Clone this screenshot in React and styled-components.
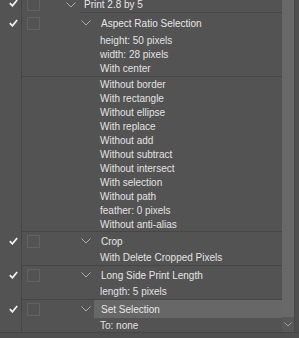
import React from 'react';
import styled, { createGlobalStyle } from 'styled-components';

const Global = createGlobalStyle`
  html, body { margin: 0; padding: 0; background: #535353; }
  body { width: 299px; height: 338px; overflow: hidden; font-family: "Liberation Sans", Arial, sans-serif; }
`;

const Panel = styled.div`
  width: 299px;
  height: 338px;
  display: flex;
  flex-direction: column;
  background: #535353;
  overflow: hidden;
`;

const Main = styled.div`
  height: 332px;
  display: flex;
  overflow: hidden;
`;

const List = styled.div`
  width: 282px;
  display: flex;
  flex-direction: column;
  overflow: hidden;
`;

const Scroller = styled.div`
  margin-top: -4px;
  display: flex;
  flex-direction: column;
`;

const Group = styled.div`
  display: flex;
`;

const CheckCol = styled.div`
  width: 22px;
  flex: 0 0 22px;
  border-right: 1px solid #464646;
  display: flex;
  align-items: flex-start;
  padding-left: 9px;
  padding-top: ${p => p.$top}px;
  box-sizing: border-box;
`;

const Body = styled.div`
  flex: 1;
  display: flex;
  flex-direction: column;
  border-bottom: ${p => (p.$sep ? '1px solid #464646' : 'none')};
`;

const TitleRow = styled.div`
  height: ${p => p.$h}px;
  display: flex;
  align-items: center;
`;

const DialogBox = styled.div`
  width: 13px;
  height: 13px;
  box-sizing: border-box;
  border: 1px solid #626262;
  margin-left: 5px;
  flex: 0 0 auto;
`;

const Chevron = styled.svg`
  margin-left: ${p => p.$ml}px;
  flex: 0 0 auto;
`;

const Title = styled.div`
  flex: 1;
  align-self: stretch;
  display: flex;
  align-items: center;
  margin-left: ${p => p.$ml}px;
  padding-left: ${p => p.$pl}px;
  background: ${p => (p.$active ? '#676767' : 'transparent')};
  border-bottom: ${p => (p.$line ? '1px solid #464646' : 'none')};
  color: #e6e6e6;
  font-size: 10px;
  white-space: nowrap;
`;

const Params = styled.div`
  padding-left: 78px;
  padding-bottom: ${p => p.$pb || 0}px;
  border-bottom: ${p => (p.$line ? '1px solid #464646' : 'none')};
  display: flex;
  flex-direction: column;
`;

const Param = styled.div`
  height: ${p => p.$h}px;
  display: flex;
  align-items: center;
  color: #e2e2e2;
  font-size: 10px;
  white-space: nowrap;
`;

const Filler = styled.div`
  flex: 1;
  display: flex;
`;

const FillerCheck = styled.div`
  width: 22px;
  border-right: 1px solid #464646;
`;

const ScrollTrack = styled.div`
  width: 12px;
  display: flex;
  flex-direction: column;
  background: #585858;
`;

const Thumb = styled.div`
  flex: 1;
  background: #686868;
`;

const ArrowBtn = styled.div`
  height: 15px;
  display: flex;
  align-items: center;
  justify-content: center;
`;

const RightEdge = styled.div`
  flex: 1;
  background: #4e4e4e;
  border-left: 1px solid #474747;
`;

const Footer = styled.div`
  flex: 1;
  border-top: 1px solid #454545;
  background: #4f4f4f;
`;

const Check = () => (
  <svg width="9" height="8" viewBox="0 0 9 8">
    <path d="M0.8 4.2 L3.4 6.8 L8.2 1" fill="none" stroke="#efefef" strokeWidth="1.8" />
  </svg>
);

const Chev = ({ ml }) => (
  <Chevron $ml={ml} width="10" height="6" viewBox="0 0 10 6">
    <path d="M0.5 0.5 L5 5 L9.5 0.5" fill="none" stroke="#adadad" strokeWidth="1" />
  </Chevron>
);

const SmallDown = () => (
  <svg width="8" height="5" viewBox="0 0 8 5">
    <path d="M0.5 0.5 L4 4 L7.5 0.5" fill="none" stroke="#9a9a9a" strokeWidth="1" />
  </svg>
);

const blockA = ['height: 50 pixels', 'width: 28 pixels', 'With center'];
const blockB = [
  'Without border',
  'With rectangle',
  'Without ellipse',
  'With replace',
  'Without add',
  'Without subtract',
  'Without intersect',
  'With selection',
  'Without path',
  'feather: 0 pixels',
  'Without anti-alias',
];

const commands = [
  { title: 'Crop', param: 'With Delete Cropped Pixels', sep: true },
  { title: 'Long Side Print Length', param: 'length: 5 pixels', sep: true },
  { title: 'Set Selection', param: 'To: none', sep: false, active: true },
];

export default function App() {
  return (
    <>
      <Global />
      <Panel>
        <Main>
          <List>
            <Scroller>
              <Group>
                <CheckCol $top={3}><Check /></CheckCol>
                <Body>
                  <TitleRow $h={17}>
                    <DialogBox />
                    <Chev ml={26} />
                    <Title $ml={4} $pl={4} $line>Print 2.8 by 5</Title>
                  </TitleRow>
                </Body>
              </Group>
              <Group>
                <CheckCol $top={6}><Check /></CheckCol>
                <Body>
                  <TitleRow $h={20}>
                    <DialogBox />
                    <Chev ml={41} />
                    <Title $ml={10} $pl={0}>Aspect Ratio Selection</Title>
                  </TitleRow>
                  <Params $line $pb={1}>
                    {blockA.map(t => <Param key={t} $h={14}>{t}</Param>)}
                  </Params>
                  <Params $line>
                    {blockB.map(t => <Param key={t} $h={14}>{t}</Param>)}
                  </Params>
                </Body>
              </Group>
              {commands.map(c => (
                <Group key={c.title}>
                  <CheckCol $top={5}><Check /></CheckCol>
                  <Body $sep={c.sep}>
                    <TitleRow $h={18}>
                      <DialogBox />
                      <Chev ml={41} />
                      <Title $ml={3} $pl={7} $active={c.active}>{c.title}</Title>
                    </TitleRow>
                    <Params>
                      <Param $h={15}>{c.param}</Param>
                    </Params>
                  </Body>
                </Group>
              ))}
            </Scroller>
            <Filler><FillerCheck /></Filler>
          </List>
          <ScrollTrack>
            <Thumb />
            <ArrowBtn><SmallDown /></ArrowBtn>
          </ScrollTrack>
          <RightEdge />
        </Main>
        <Footer />
      </Panel>
    </>
  );
}
